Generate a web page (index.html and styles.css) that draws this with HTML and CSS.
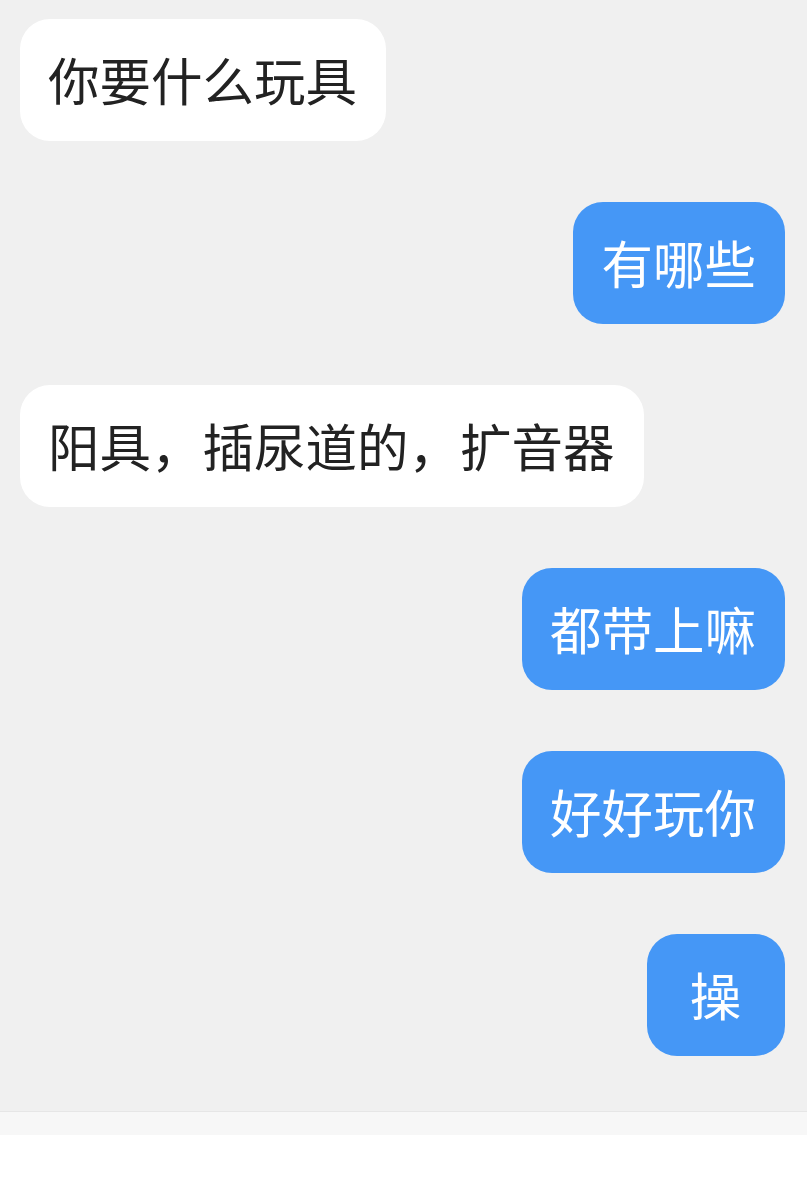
FILE: index.html
```html
<!DOCTYPE html>
<html lang="zh-CN">
<head>
  <meta charset="UTF-8" />
  <title>聊天</title>
  <meta name="viewport" content="width=device-width, initial-scale=1" />
  <link rel="stylesheet" href="styles.css">
</head>
<body>
  <div class="chat">
    <div class="row left"><div class="bubble">你要什么玩具</div></div>
    <div class="row right"><div class="bubble">有哪些</div></div>
    <div class="row left"><div class="bubble">阳具，插尿道的，扩音器</div></div>
    <div class="row right"><div class="bubble">都带上嘛</div></div>
    <div class="row right"><div class="bubble">好好玩你</div></div>
    <div class="row right"><div class="bubble single">操</div></div>
  </div>
  <div class="footer">
    <div class="footer-strip"></div>
  </div>
</body>
</html>
```

FILE: styles.css
```css
body {
  margin: 0;
  font-family: "Noto Sans CJK SC", "Noto Sans", sans-serif;
  background: #fff;
}
.chat {
  background: #f0f0f0;
  padding: 19px 22px 54px 20px;
  display: flex;
  flex-direction: column;
  gap: 61px;
  height: 1111px;
  box-sizing: border-box;
}
.row {
  display: flex;
}
.row.left {
  justify-content: flex-start;
}
.row.right {
  justify-content: flex-end;
}
.bubble {
  font-size: 51.5px;
  line-height: 62px;
  padding: 29px 29px 31px 28px;
  border-radius: 30px;
  white-space: nowrap;
}
.left .bubble {
  background: #fff;
  color: #222;
}
.right .bubble {
  background: #4597f6;
  color: #fff;
}
.bubble.single {
  min-width: 138px;
  box-sizing: border-box;
  text-align: center;
}
.footer {
  border-top: 1px solid #e6e6e6;
}
.footer-strip {
  height: 23px;
  background: #f7f7f7;
}
```
